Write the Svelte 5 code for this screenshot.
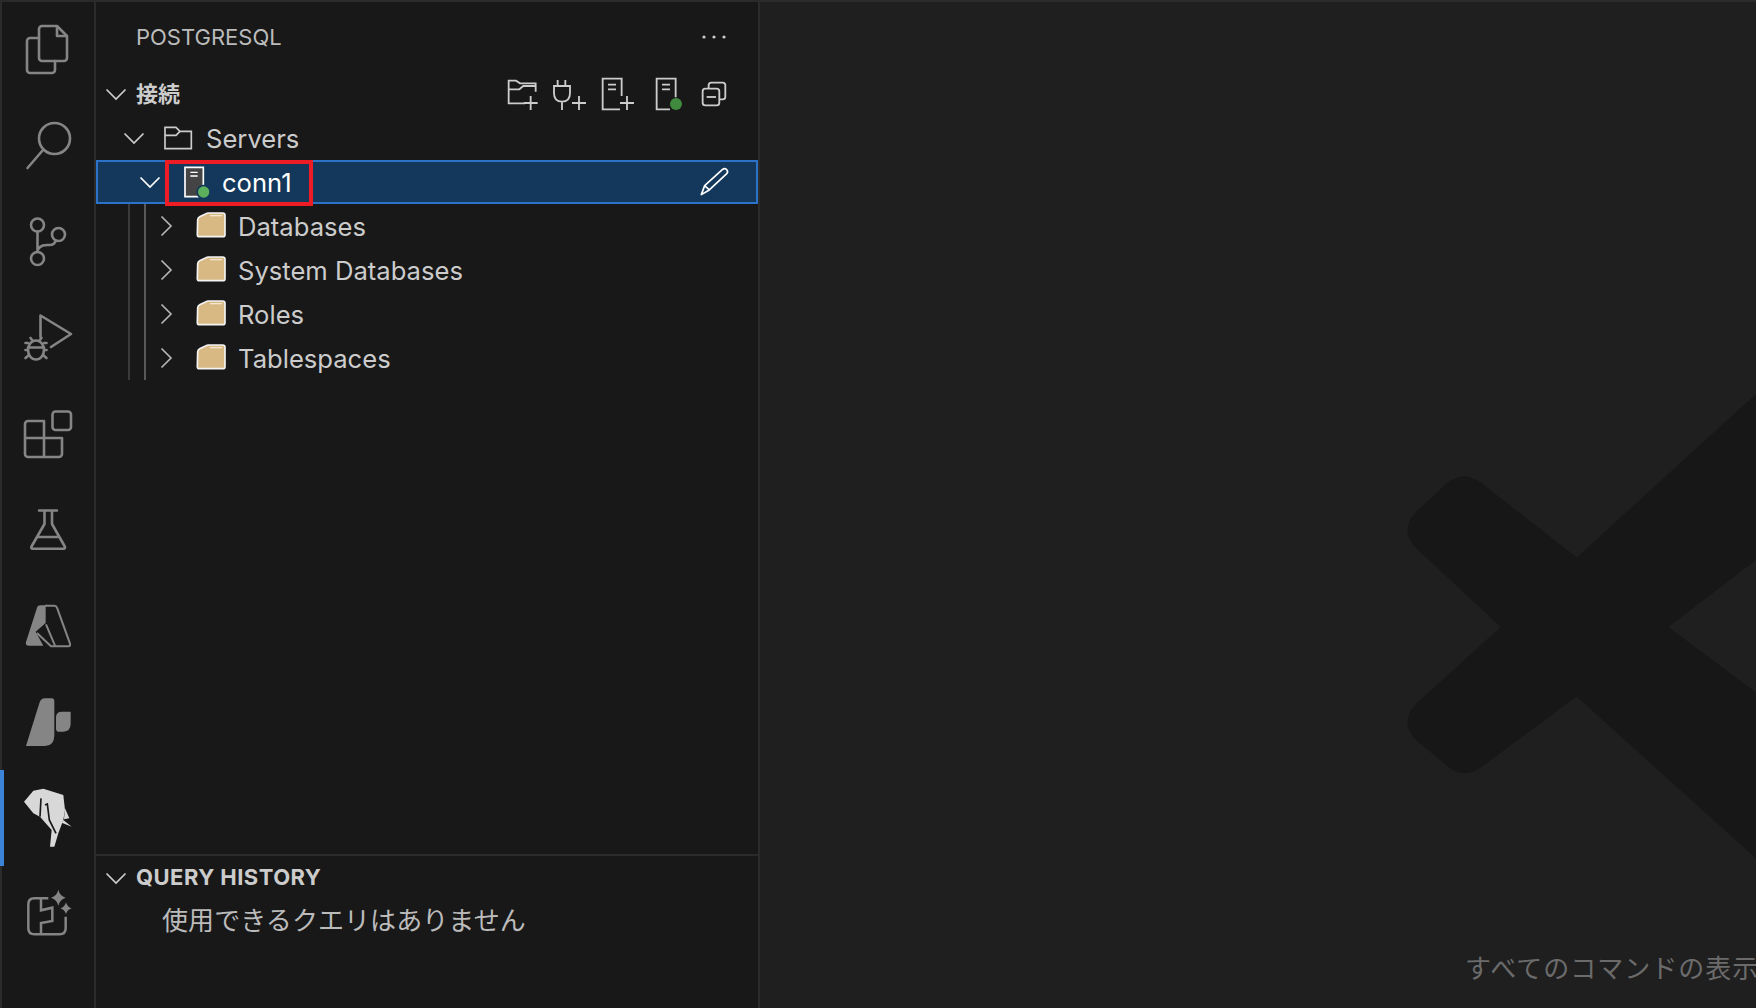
<script lang="ts">
  const children = ['Databases', 'System Databases', 'Roles', 'Tablespaces'];
</script>

<div class="app">
  <nav class="activity">
    <div class="act">
      <svg viewBox="0 0 96 96" class="ln">
        <path d="M42 24H57L67 34V56a3 3 0 0 1-3 3H42a3 3 0 0 1-3-3V27a3 3 0 0 1 3-3Z" />
        <path d="M57 25V34H66" />
        <path d="M39 36H30a3 3 0 0 0-3 3V68a3 3 0 0 0 3 3H52a3 3 0 0 0 3-3V59" />
      </svg>
    </div>
    <div class="act">
      <svg viewBox="0 0 96 96" class="ln">
        <circle cx="54.5" cy="40.5" r="15.5" />
        <path d="M43 52L27.5 70" />
      </svg>
    </div>
    <div class="act">
      <svg viewBox="0 0 96 96" class="ln">
        <circle cx="37.5" cy="31" r="6.5" />
        <circle cx="58.5" cy="40.5" r="6.5" />
        <circle cx="37.5" cy="64.5" r="6.5" />
        <path d="M37.5 37.5V58M37.5 56C41 50 46 51 50 51C53 51 55 49 56 46.5" />
      </svg>
    </div>
    <div class="act">
      <svg viewBox="0 0 96 96" class="ln">
        <path d="M40.5 47V25.5L71 44L51 57" />
        <ellipse cx="36" cy="60" rx="8" ry="9.500" />
        <path d="M28 57.500H44M33 51L30.500 48M39 51L41.500 48M25.500 53H28M44 53H46.500M25.500 60H28M44 60H46.500M25.500 68L29 65M46.500 68L43 65" />
      </svg>
    </div>
    <div class="act">
      <svg viewBox="0 0 96 96" class="ln">
        <rect x="52.500" y="25.500" width="18.500" height="18.500" rx="3" />
        <path d="M44 35H28a3 3 0 0 0-3 3V68a3 3 0 0 0 3 3H59a3 3 0 0 0 3-3V52H44ZM25 52H44M44 52V71" />
      </svg>
    </div>
    <div class="act">
      <svg viewBox="0 0 96 96" class="ln">
        <path d="M39 28.500H57M44.500 28.500V42L31.500 64.500a1.500 1.500 0 0 0 1.300 2.300H63.500a1.500 1.500 0 0 0 1.300-2.300L52 42V28.500M37.500 55H58.500" />
      </svg>
    </div>
    <div class="act">
      <svg viewBox="0 0 96 96">
        <g transform="translate(15 17) scale(.3333)">
          <path class="fill" d="M78 31H92V84L62 110L85 152H42Q30 152 33 141L66 38Q68 31 78 31Z" />
          <path class="az" d="M90 32H118Q124 32 126 38L165 146Q167 154 160 154H108L66 114M93 88L120 152" />
        </g>
      </svg>
    </div>
    <div class="act">
      <svg viewBox="0 0 96 96">
        <g transform="translate(0 -4) scale(.3333)">
          <path class="fill" d="M135 85H155Q163 85 163 95V195Q163 228 135 228H78L118 100Q122 85 135 85Z" />
          <path class="fill" d="M168 140Q170 125 185 125H212V160Q212 185 190 185H175Q168 185 168 175Z" />
        </g>
      </svg>
    </div>
    <div class="act on">
      <svg viewBox="0 0 96 96">
        <g transform="translate(10 10) scale(.3333)">
          <path class="ele" d="M42 65L70 32L100 26L160 45L165 90L160 120L145 160L133 200H120L125 150L90 110L70 100Z" />
          <path class="ele" d="M165 85L178 115L162 118ZM160 120L185 140L155 128Z" />
          <path class="cut" d="M93 55L90 110M105 75L112 72L118 120L138 160" />
        </g>
      </svg>
    </div>
    <div class="act">
      <svg viewBox="0 0 96 96">
        <g transform="translate(15 19) scale(.3333)">
          <path class="cp" d="M100 40H58Q40 40 40 58V130Q40 148 58 148H134Q152 148 152 130V95M78 40V76L112 68V108L78 114V148" />
          <path class="fill" d="M130 14Q134 32 152 38Q134 44 130 62Q126 44 108 38Q126 32 130 14Z" />
          <path class="fill" d="M153 52Q156 66 170 70Q156 74 153 88Q150 74 136 70Q150 66 153 52Z" />
        </g>
      </svg>
    </div>
  </nav>

  <aside class="side">
    <header class="side-head">
      <span class="title">POSTGRESQL</span>
      <svg class="more" viewBox="0 0 24 8">
        <circle cx="2" cy="4" r="1.600" /><circle cx="12" cy="4" r="1.600" /><circle cx="22" cy="4" r="1.600" />
      </svg>
    </header>

    <div class="sec-head">
      <svg class="chev" viewBox="0 0 24 24"><path d="M2.500 7.500L12 17L21.500 7.500" /></svg>
      <span class="sec-title cjk">接続</span>
      <div class="tools">
        <svg viewBox="0 0 44 44" class="ti">
          <g transform="translate(-20 -62) scale(.3333)">
            <path d="M167 245V220H120L108 212H86V280H135M86 238H118L130 228H167M131 279H173M152 258V300" />
          </g>
        </svg>
        <svg viewBox="0 0 44 44" class="ti">
          <g transform="translate(-68 -62) scale(.3333)">
            <path d="M233 210V228M256 210V228M222 228H270V250Q270 275 246 275Q222 275 222 250ZM246 275V300M276 279H318M297 258V300" />
          </g>
        </svg>
        <svg viewBox="0 0 44 44" class="ti">
          <g transform="translate(-116 -62) scale(.3333)">
            <path d="M425 258V206H368V298H420M384 224H408M384 238H408M420 279H462M441 258V300" />
          </g>
        </svg>
        <svg viewBox="0 0 44 44" class="ti">
          <g transform="translate(-164 -62) scale(.3333)">
            <path d="M587 262V206H530V298H570M546 224H570M546 238H570" />
            <circle class="dot-dim" cx="588" cy="282" r="18" />
          </g>
        </svg>
        <svg viewBox="0 0 44 44" class="ti">
          <g transform="translate(-212 -62) scale(.3333)">
            <path d="M686 236V226Q686 218 694 218H728Q736 218 736 226V260Q736 268 728 268H719" />
            <rect x="668" y="236" width="50" height="50" rx="8" />
            <path d="M680 261H708" />
          </g>
        </svg>
      </div>
    </div>

    <div class="tree">
      <span class="guide g1"></span>
      <span class="guide g2"></span>

      <div class="row lv0">
        <svg class="chev" viewBox="0 0 24 24"><path d="M2.500 7.500L12 17L21.500 7.500" /></svg>
        <svg class="ico ti" viewBox="0 0 44 44">
          <g transform="translate(-60 -106) scale(.3333)">
            <path class="thin" d="M207 352H240L252 364H286V416H207ZM207 376H240L252 364" />
          </g>
        </svg>
        <span>Servers</span>
      </div>

      <div class="row lv1 sel">
        <svg class="chev bright" viewBox="0 0 24 24"><path d="M2.500 7.500L12 17L21.500 7.500" /></svg>
        <svg class="ico" viewBox="0 0 44 44">
          <g transform="translate(-76 -150) scale(.3333)">
            <path class="srv" d="M267 472H322V560H267Z" />
            <path class="srv-l" d="M283 487H305M283 498H305" />
            <circle class="halo" cx="323" cy="546" r="22" />
            <circle class="dot" cx="323" cy="546" r="17" />
          </g>
        </svg>
        <span>conn1</span>
        <svg class="ico pencil" viewBox="0 0 44 44">
          <g transform="translate(-212 -150) scale(.3333)">
            <path d="M727 479Q735 472 741 480Q746 487 738 493L688 540L664 554L674 527ZM674 527L688 540" />
          </g>
        </svg>
        <span class="mark"></span>
      </div>

      {#each children as label}
        <div class="row lv2">
          <svg class="chev right" viewBox="0 0 24 24"><path d="M7.500 2.500L17 12L7.500 21.500" /></svg>
          <svg class="ico" viewBox="0 0 44 44">
            <g transform="translate(-92 -4) scale(.3333)">
              <path class="folder" d="M305 60Q305 53 311 50L330 41Q333 39 337 39H380Q387 39 387 46V104Q387 110 380 110H311Q304 110 304 104Z" />
              <path class="shine" d="M342 47H378" />
            </g>
          </svg>
          <span>{label}</span>
        </div>
      {/each}
    </div>

    <section class="history">
      <div class="sec-head">
        <svg class="chev" viewBox="0 0 24 24"><path d="M2.500 7.500L12 17L21.500 7.500" /></svg>
        <span class="sec-title query">QUERY HISTORY</span>
      </div>
      <p class="empty">使用できるクエリはありません</p>
    </section>
  </aside>

  <main class="editor">
    <svg class="press" viewBox="760 0 996 1008">
      <path fill-rule="evenodd" d="M1576.700 557.400L1480 482Q1462 470 1446 484L1416 512Q1399 530 1416 548L1500.700 627L1416 704Q1399 722 1416 740L1446 765Q1462 780 1480 768L1576.700 696.400L1756 858.600V394ZM1668.300 627L1756 560V692.400Z" />
    </svg>
    <div class="hint">すべてのコマンドの表示</div>
  </main>
</div>

<style>
  :global(body) {
    margin: 0;
    background: #1f1f1f;
  }

  .app {
    display: flex;
    width: 1756px;
    height: 1008px;
    box-sizing: border-box;
    border-top: 2px solid #2b2b2b;
    overflow: hidden;
    font-family: Inter, "Noto Sans CJK JP", sans-serif;
    font-size: 25.600px;
    color: #cccccc;
  }

  svg {
    display: block;
    flex: none;
  }

  /* activity bar */
  .activity {
    width: 96px;
    flex: none;
    box-sizing: border-box;
    background: #181818;
    box-shadow: inset 2px 0 #2b2b2b;
    border-right: 2px solid #2b2b2b;
  }

  .act {
    position: relative;
    height: 96px;
  }

  .act svg {
    width: 96px;
    height: 96px;
  }

  .act.on::before {
    content: '';
    position: absolute;
    left: 0;
    top: 0;
    width: 4px;
    height: 96px;
    background: #3b84d9;
  }

  .ln :global(*) {
    fill: none;
    stroke: #858585;
    stroke-width: 2.6;
    stroke-linejoin: round;
    stroke-linecap: round;
  }

  .fill {
    fill: #858585;
  }

  .az {
    fill: none;
    stroke: #858585;
    stroke-width: 6;
    stroke-linejoin: round;
  }

  .cp {
    fill: none;
    stroke: #858585;
    stroke-width: 7.500;
  }

  .ele {
    fill: #d8d8d8;
  }

  .cut {
    fill: none;
    stroke: #181818;
    stroke-width: 5;
  }

  /* sidebar */
  .side {
    position: relative;
    width: 664px;
    flex: none;
    box-sizing: border-box;
    display: flex;
    flex-direction: column;
    background: #181818;
    border-right: 2px solid #2b2b2b;
  }

  .side-head {
    height: 70px;
    flex: none;
    display: flex;
    align-items: center;
    justify-content: space-between;
    padding: 0 32px 0 40px;
  }

  .title {
    font-size: 22px;
    color: #bbbbbb;
  }

  .more {
    width: 24px;
    height: 8px;
  }

  .more circle {
    fill: #cccccc;
  }

  .sec-head {
    height: 44px;
    flex: none;
    display: flex;
    align-items: center;
    padding-left: 8px;
  }

  .sec-title {
    margin-left: 8px;
    font-size: 22px;
    font-weight: 700;
    color: #cccccc;
  }

  .cjk {
    padding-bottom: 4px;
  }

  .query {
    padding-bottom: 2px;
    letter-spacing: 0.45px;
  }

  .tools {
    display: flex;
    gap: 4px;
    margin-left: auto;
    margin-right: 22px;
  }

  .tools svg {
    width: 44px;
    height: 44px;
  }

  .ti :global(path),
  .ti :global(rect) {
    fill: none;
    stroke: #cccccc;
    stroke-width: 5.500;
  }

  .ti :global(path.thin) {
    stroke-width: 5;
  }

  .dot-dim {
    fill: #3f8a3f;
  }

  .chev {
    width: 24px;
    height: 24px;
    fill: none;
    stroke: #cccccc;
    stroke-width: 1.700;
  }

  .chev.right {
    stroke: #b4b4b4;
  }

  .chev.bright {
    stroke: #ffffff;
  }

  /* tree */
  .tree {
    position: relative;
    flex: 1;
  }

  .guide {
    position: absolute;
    width: 2px;
  }

  .g1 {
    left: 32px;
    top: 44px;
    height: 220px;
    background: #3a3a3a;
  }

  .g2 {
    left: 48px;
    top: 88px;
    height: 176px;
    background: #585858;
  }

  .row {
    position: relative;
    height: 44px;
    display: flex;
    align-items: center;
  }

  .lv0 { padding-left: 26px; }
  .lv1 { padding-left: 42px; }
  .lv2 { padding-left: 58px; }

  .row .ico {
    width: 44px;
    height: 44px;
    margin: 0 6px 0 10px;
  }

  .sel {
    background: #14385c;
    outline: 2px solid #2a73c8;
    outline-offset: -2px;
    color: #ffffff;
  }

  .row .pencil {
    margin: 0 22px 0 auto;
  }

  .pencil path {
    fill: none;
    stroke: #ffffff;
    stroke-width: 5;
    stroke-linejoin: round;
  }

  .srv {
    fill: #444444;
    stroke: #ffffff;
    stroke-width: 5;
  }

  .srv-l {
    fill: none;
    stroke: #ffffff;
    stroke-width: 4;
  }

  .halo {
    fill: #14385c;
  }

  .dot {
    fill: #5cb05c;
  }

  .folder {
    fill: #d8b883;
    stroke: #f4f4f4;
    stroke-width: 5;
    stroke-linejoin: round;
  }

  .shine {
    fill: none;
    stroke: #f2e6cf;
    stroke-width: 4;
  }

  .mark {
    position: absolute;
    left: 69px;
    top: 0;
    width: 148px;
    height: 46px;
    box-sizing: border-box;
    border: 4.500px solid #ee1c25;
  }

  /* query history */
  .history {
    height: 152px;
    flex: none;
    border-top: 2px solid #2b2b2b;
  }

  .empty {
    margin: 0;
    height: 44px;
    line-height: 42px;
    padding-left: 66px;
    font-size: 26px;
    letter-spacing: 0.08px;
    color: #bbbbbb;
  }

  /* editor */
  .editor {
    position: relative;
    flex: 1;
    display: flex;
    flex-direction: column;
    justify-content: flex-end;
    background: #1f1f1f;
    overflow: hidden;
  }

  .press {
    position: absolute;
    left: 0;
    top: -2px;
    width: 996px;
    height: 1008px;
    fill: #171717;
  }

  .hint {
    position: relative;
    padding: 0 0 17px 705px;
    line-height: 44px;
    font-size: 26px;
    white-space: nowrap;
    letter-spacing: 1px;
    color: #6b6b6b;
  }
</style>
